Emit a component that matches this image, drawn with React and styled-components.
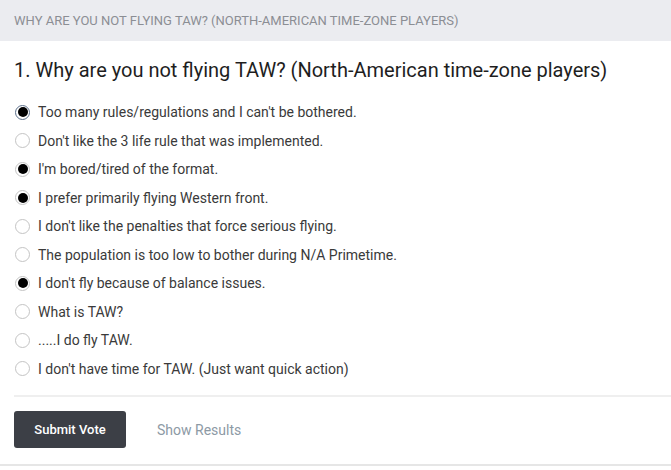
import { useState } from "react";
import styled, { createGlobalStyle } from "styled-components";

const Global = createGlobalStyle`
  body {
    margin: 0;
    background: #fff;
    font-family: Roboto, "Liberation Sans", sans-serif;
  }
`;

const Poll = styled.section`
  width: 671px;
  border-bottom: 2px solid #e6e6e6;
`;

const Header = styled.div`
  height: 41px;
  display: flex;
  align-items: center;
  padding: 0 14px;
  background: #ebecf0;
  color: #8b8e94;
  font-size: 13px;
  text-transform: uppercase;
`;

const Body = styled.div`
  padding: 0 0 0 14px;
`;

const Title = styled.h2`
  margin: 0;
  padding: 16px 0 15px;
  font-size: 20px;
  font-weight: 400;
  color: #1e1e1e;
  line-height: 26px;
`;

const Options = styled.div`
  display: flex;
  flex-direction: column;
  padding-bottom: 12px;
`;

const Option = styled.label`
  display: flex;
  align-items: center;
  gap: 8px;
  height: 28.5px;
  font-size: 14px;
  color: #3a3a3a;
  cursor: pointer;
`;

const Radio = styled.span`
  width: 13px;
  height: 13px;
  margin-left: 1px;
  border-radius: 50%;
  border: 1px solid ${(p) => (p.$focused ? "#5b6f8a" : "#c4c4c4")};
  display: flex;
  align-items: center;
  justify-content: center;
  flex-shrink: 0;

  &::after {
    content: "";
    width: 10px;
    height: 10px;
    border-radius: 50%;
    background: ${(p) => (p.$checked ? "#000" : "transparent")};
  }
`;

const Divider = styled.hr`
  margin: 0;
  border: none;
  height: 2px;
  background: #efefef;
`;

const Actions = styled.div`
  display: flex;
  align-items: center;
  gap: 31px;
  padding: 14px 0 16px;
`;

const Button = styled.button`
  width: 112px;
  height: 37px;
  border: none;
  border-radius: 3px;
  background: #3c3f46;
  color: #fff;
  font-family: inherit;
  font-size: 13px;
  font-weight: 500;
`;

const LinkButton = styled.span`
  color: #8d9aa5;
  font-size: 14px;
`;

const answers = [
  "Too many rules/regulations and I can't be bothered.",
  "Don't like the 3 life rule that was implemented.",
  "I'm bored/tired of the format.",
  "I prefer primarily flying Western front.",
  "I don't like the penalties that force serious flying.",
  "The population is too low to bother during N/A Primetime.",
  "I don't fly because of balance issues.",
  "What is TAW?",
  ".....I do fly TAW.",
  "I don't have time for TAW. (Just want quick action)",
];

export default function App() {
  const [picked] = useState([0, 2, 3, 6]);

  return (
    <>
      <Global />
      <Poll>
        <Header>Why are you not flying TAW? (North-American time-zone players)</Header>
        <Body>
          <Title>1. Why are you not flying TAW? (North-American time-zone players)</Title>
          <Options>
            {answers.map((answer, i) => (
              <Option key={answer}>
                <Radio $checked={picked.includes(i)} $focused={i === 0} />
                {answer}
              </Option>
            ))}
          </Options>
          <Divider />
          <Actions>
            <Button>Submit Vote</Button>
            <LinkButton>Show Results</LinkButton>
          </Actions>
        </Body>
      </Poll>
    </>
  );
}
